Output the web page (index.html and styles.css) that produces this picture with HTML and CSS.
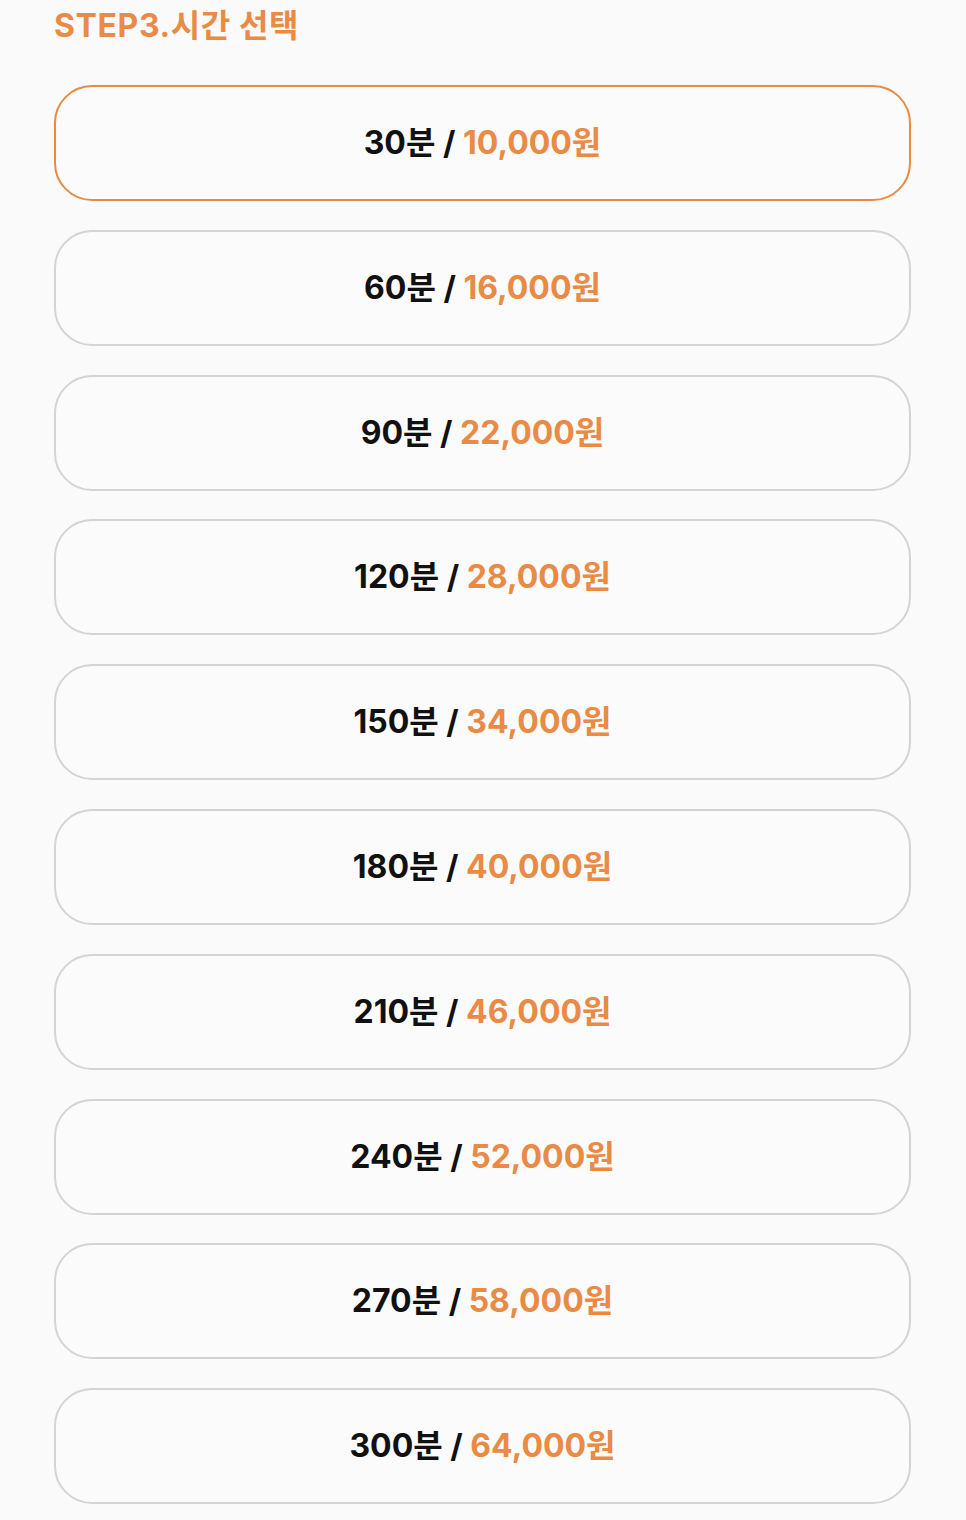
FILE: index.html
```html
<!DOCTYPE html>
<html lang="ko">
<head>
    <meta charset="UTF-8">
    <meta name="viewport" content="width=device-width, initial-scale=1.0">
    <title>STEP3 시간 선택</title>
    <link rel="stylesheet" href="styles.css">
</head>
<body>
<div class="wrap">
    <h2 class="step-title">STEP3.시간 선택</h2>
    <div class="time-list">
        <button class="time-option selected"><span class="mins">30분 / </span><span class="price">10,000원</span></button>
        <button class="time-option"><span class="mins">60분 / </span><span class="price">16,000원</span></button>
        <button class="time-option"><span class="mins">90분 / </span><span class="price">22,000원</span></button>
        <button class="time-option"><span class="mins">120분 / </span><span class="price">28,000원</span></button>
        <button class="time-option"><span class="mins">150분 / </span><span class="price">34,000원</span></button>
        <button class="time-option"><span class="mins">180분 / </span><span class="price">40,000원</span></button>
        <button class="time-option"><span class="mins">210분 / </span><span class="price">46,000원</span></button>
        <button class="time-option"><span class="mins">240분 / </span><span class="price">52,000원</span></button>
        <button class="time-option"><span class="mins">270분 / </span><span class="price">58,000원</span></button>
        <button class="time-option"><span class="mins">300분 / </span><span class="price">64,000원</span></button>
    </div>
</div>
</body>
</html>
```

FILE: styles.css
```css
body {
    margin: 0;
    background-color: #fafafa;
    font-family: Inter, "Noto Sans CJK KR", sans-serif;
}

.wrap {
    padding: 0 55px 0 54px;
}

.step-title {
    margin: 0;
    padding-top: 6px;
    font-size: 32px;
    line-height: 40px;
    letter-spacing: 0.6px;
    font-weight: 700;
    color: #e98a45;
}

.time-list {
    display: flex;
    flex-direction: column;
    gap: 28.8px;
    margin-top: 39px;
}

.time-option {
    height: 116px;
    padding: 0 0 6px;
    border: 2px solid #d4d4d4;
    border-radius: 38px;
    background-color: #fbfbfb;
    font-family: Inter, "Noto Sans CJK KR", sans-serif;
    font-size: 32px;
    font-weight: 700;
    color: #111111;
    cursor: pointer;
}

.time-option.selected {
    border-color: #e98a45;
}

.price {
    color: #e98a45;
}
```
